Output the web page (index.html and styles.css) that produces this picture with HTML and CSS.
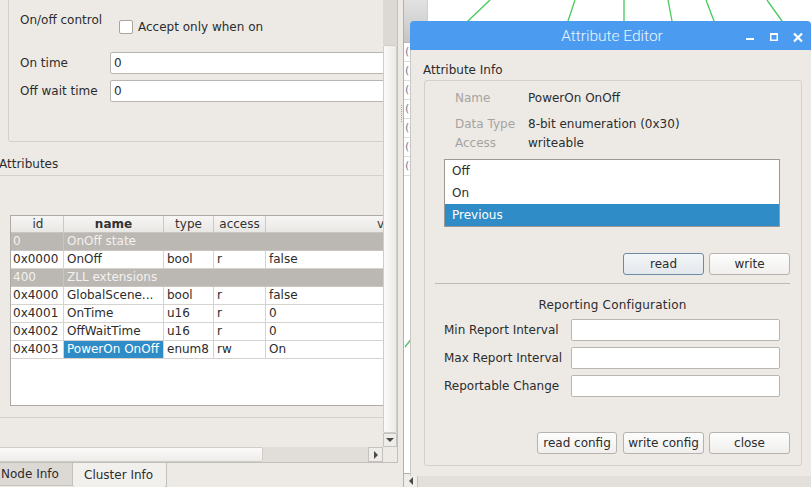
FILE: index.html
```html
<!DOCTYPE html>
<html>
<head>
<meta charset="utf-8">
<link rel="stylesheet" href="styles.css">
</head>
<body>
<div class="app">
  <div class="leftcol">
    <div class="scrollarea">
      <div class="sa-main">
        <div class="viewport">
          <div class="opts-group">
            <div class="form-row row-top">
              <div class="flabel">On/off control</div>
              <div class="check-field"><span class="checkbox"></span><span>Accept only when on</span></div>
            </div>
            <div class="form-row">
              <div class="flabel">On time</div>
              <div class="line-edit wide">0</div>
            </div>
            <div class="form-row">
              <div class="flabel">Off wait time</div>
              <div class="line-edit wide">0</div>
            </div>
          </div>
          <div class="group-title">Attributes</div>
          <div class="attr-group">
            <div class="tbl">
              <div class="trow thead">
                <div class="c c-id">id</div><div class="c c-name"><b>name</b></div><div class="c c-type">type</div><div class="c c-acc">access</div><div class="c c-val">value</div>
              </div>
              <div class="trow tgroup">
                <div class="c c-id">0</div><div class="c c-span">OnOff state</div>
              </div>
              <div class="trow">
                <div class="c c-id">0x0000</div><div class="c c-name">OnOff</div><div class="c c-type">bool</div><div class="c c-acc">r</div><div class="c c-val">false</div>
              </div>
              <div class="trow tgroup">
                <div class="c c-id">400</div><div class="c c-span">ZLL extensions</div>
              </div>
              <div class="trow">
                <div class="c c-id">0x4000</div><div class="c c-name">GlobalScene...</div><div class="c c-type">bool</div><div class="c c-acc">r</div><div class="c c-val">false</div>
              </div>
              <div class="trow">
                <div class="c c-id">0x4001</div><div class="c c-name">OnTime</div><div class="c c-type">u16</div><div class="c c-acc">r</div><div class="c c-val">0</div>
              </div>
              <div class="trow">
                <div class="c c-id">0x4002</div><div class="c c-name">OffWaitTime</div><div class="c c-type">u16</div><div class="c c-acc">r</div><div class="c c-val">0</div>
              </div>
              <div class="trow">
                <div class="c c-id">0x4003</div><div class="c c-name sel">PowerOn OnOff</div><div class="c c-type">enum8</div><div class="c c-acc">rw</div><div class="c c-val">On</div>
              </div>
            </div>
          </div>
        </div>
        <div class="vscroll">
          <div class="vgroove"></div>
          <div class="vhandle"></div>
          <div class="sbtn"><span class="tri-down"></span></div>
        </div>
      </div>
      <div class="sa-bottom">
        <div class="hscroll">
          <div class="hhandle"></div>
          <div class="hgroove"></div>
          <div class="sbtn hbtn"><span class="tri-right"></span></div>
        </div>
        <div class="corner"></div>
      </div>
    </div>
    <div class="tabs">
      <div class="tab">Node Info</div>
      <div class="tab active">Cluster Info</div>
    </div>
  </div>
  <div class="splitter"><div class="grip"></div></div>
  <div class="right">
    <div class="graph">
      <svg class="links" width="407" height="473" viewBox="0 0 407 473">
        <g stroke="#45c95a" stroke-width="1.3" fill="none">
          <line x1="86" y1="0" x2="44" y2="40"/>
          <line x1="171" y1="0" x2="157" y2="42"/>
          <line x1="220" y1="0" x2="220" y2="42"/>
          <line x1="264" y1="0" x2="272" y2="42"/>
          <line x1="302" y1="0" x2="318" y2="42"/>
          <line x1="363" y1="0" x2="393" y2="42"/>
          <line x1="1" y1="347" x2="30" y2="310"/>
        </g>
      </svg>
      <div class="nodelist">
        <div class="nl-head"></div>
        <div class="nl-row">(2</div>
        <div class="nl-row">(1</div>
        <div class="nl-row">(0</div>
        <div class="nl-row">(5</div>
        <div class="nl-row">(0</div>
        <div class="nl-row">(0</div>
        <div class="nl-row">(0</div>
      </div>
    </div>
    <div class="gscroll">
      <div class="garrow"><span class="tri-left"></span></div>
      <div class="ggroove"></div>
    </div>
  </div>
</div>

<div class="dialog">
  <div class="titlebar">
    <div></div>
    <div class="wtitle">Attribute Editor</div>
    <div class="wbtns">
      <span class="wbtn"><svg width="24" height="29" viewBox="0 0 24 29"><rect x="8" y="17" width="8" height="2" fill="#ffffff"/></svg></span>
      <span class="wbtn"><svg width="24" height="29" viewBox="0 0 24 29"><rect x="8.75" y="12.75" width="6.5" height="6.5" fill="none" stroke="#ffffff" stroke-width="1.5"/><rect x="8" y="12" width="8" height="2" fill="#ffffff"/></svg></span>
      <span class="wbtn"><svg width="24" height="29" viewBox="0 0 24 29"><path d="M8 12.5 L16 20.5 M16 12.5 L8 20.5" stroke="#ffffff" stroke-width="2.2" fill="none"/></svg></span>
    </div>
  </div>
  <div class="dlg-body">
    <div class="dlg-gtitle">Attribute Info</div>
    <div class="dlg-group">
      <div class="info">
        <div class="info-row r1"><span class="ilabel">Name</span><span>PowerOn OnOff</span></div>
        <div class="info-row r2"><span class="ilabel">Data Type</span><span>8-bit enumeration (0x30)</span></div>
        <div class="info-row r3"><span class="ilabel">Access</span><span>writeable</span></div>
      </div>
      <div class="enum-list">
        <div class="enum-item">Off</div>
        <div class="enum-item">On</div>
        <div class="enum-item selected">Previous</div>
      </div>
      <div class="btn-row rw-row">
        <div class="btn default">read</div>
        <div class="btn">write</div>
      </div>
      <div class="hsep"></div>
      <div class="rep-title">Reporting Configuration</div>
      <div class="rep-form">
        <div class="rep-row"><span class="rlabel">Min Report Interval</span><div class="line-edit rep-input"></div></div>
        <div class="rep-row"><span class="rlabel">Max Report Interval</span><div class="line-edit rep-input"></div></div>
        <div class="rep-row"><span class="rlabel">Reportable Change</span><div class="line-edit rep-input"></div></div>
      </div>
      <div class="btn-row cfg-row">
        <div class="btn b-rc">read config</div>
        <div class="btn b-wc">write config</div>
        <div class="btn b-close">close</div>
      </div>
    </div>
  </div>
</div>
</body>
</html>
```

FILE: styles.css
```css
* { box-sizing: border-box; }

body {
  margin: 0;
  width: 811px;
  height: 487px;
  overflow: hidden;
  position: relative;
  background: #edeae6;
  font-family: "DejaVu Sans", sans-serif;
  font-size: 12px;
  line-height: 14px;
  color: #2c2c2c;
}

.app { display: flex; height: 487px; }

/* ---------- left column ---------- */
.leftcol { width: 398px; flex: none; display: flex; flex-direction: column; }

.scrollarea {
  width: 398px;
  height: 463px;
  border-right: 1px solid #c2beb9;
  border-bottom: 1px solid #c2beb9;
  display: flex;
  flex-direction: column;
}

.sa-main { display: flex; height: 447px; }

.viewport { width: 383px; height: 447px; overflow: hidden; flex: none; }

.opts-group {
  margin: -10px 0 0 8px;
  width: 400px;
  border: 1px solid #d3cfca;
  border-radius: 3px;
  padding: 22px 0 39px 11px;
  display: flex;
  flex-direction: column;
  gap: 6px;
}

.form-row { display: flex; align-items: center; }
.row-top { height: 33px; align-items: flex-start; }
.flabel { width: 90px; flex: none; }
.check-field { display: flex; align-items: center; padding-top: 7px; padding-left: 9px; gap: 5px; }
.checkbox {
  width: 14px; height: 14px;
  background: #fff;
  border: 1px solid #a9a5a0;
  border-radius: 2px;
  display: inline-block;
}

.line-edit {
  height: 22px;
  background: #fff;
  border: 1px solid #b9b5b0;
  border-radius: 2px;
  padding-left: 3px;
  line-height: 20px;
}
.wide { width: 300px; }

.group-title { margin: 15px 0 0 -1px; height: 14px; }

.attr-group {
  margin: 4px 0 0 -3px;
  width: 400px;
  border: 1px solid #d3cfca;
  border-radius: 3px;
  padding: 39px 0 11px 12px;
}

.tbl {
  width: 520px;
  height: 191px;
  border: 1px solid #aeaaa6;
  background: #fff;
  overflow: hidden;
}

.trow { display: flex; height: 18px; border-bottom: 1px solid #d6d3cf; }
.trow .c {
  border-right: 1px solid #d6d3cf;
  padding-left: 3px;
  line-height: 17px;
  white-space: nowrap;
  overflow: hidden;
  flex: none;
}
.c-id { width: 53px; padding-left: 2px !important; }
.c-name { width: 100px; }
.c-type { width: 50px; }
.c-acc { width: 52px; }
.c-val { width: 256px; }
.c-span { width: 458px; border-right: none !important; }

.thead { height: 17px; background: linear-gradient(#f7f6f5, #e9e7e4); border-bottom-color: #c9c5c1; }
.thead .c { text-align: center; padding-left: 0; line-height: 16px; border-right-color: #cdc9c5; color: #333; }
.thead b { font-weight: bold; }

.tgroup { background: #bbb7b3; color: #f3f1ef; border-bottom-color: #c9c6c2; }
.tgroup .c { border-right-color: #c8c5c1; }

.sel { background: #308cc6; color: #fff; }

/* vertical scrollbar */
.vscroll { width: 14px; flex: none; display: flex; flex-direction: column; }
.vgroove { height: 45px; background: #dcd9d5; }
.vhandle {
  flex: 1;
  background: linear-gradient(to right, #fbfaf9, #ecebe8);
  border: 1px solid #d0ccc7;
  border-radius: 2px;
}
.sbtn {
  height: 14px;
  background: #efedea;
  border: 1px solid #c6c2bd;
  display: flex;
  align-items: center;
  justify-content: center;
}
.tri-down { width: 0; height: 0; border-left: 4px solid transparent; border-right: 4px solid transparent; border-top: 4px solid #4a4a4a; }
.tri-right { width: 0; height: 0; border-top: 4px solid transparent; border-bottom: 4px solid transparent; border-left: 4px solid #4a4a4a; }
.tri-left { width: 0; height: 0; border-top: 4px solid transparent; border-bottom: 4px solid transparent; border-right: 4px solid #4a4a4a; }

.sa-bottom { display: flex; height: 15px; }
.hscroll { width: 383px; display: flex; }
.hhandle {
  width: 263px;
  background: linear-gradient(#fbfaf9, #eeece9);
  border: 1px solid #d0ccc7;
  border-left: none;
  border-radius: 0 2px 2px 0;
}
.hgroove { flex: 1; background: #e1deda; }
.hbtn { width: 15px; height: 15px; }
.corner { flex: 1; background: #edeae6; }

.tabs { display: flex; height: 24px; align-items: flex-start; }
.tab {
  height: 23px;
  line-height: 22px;
  padding: 0 0 0 1px;
  background: #dcd9d5;
  border-right: 1px solid #c4c0bb;
  border-bottom: 1px solid #c4c0bb;
  width: 73px;
  white-space: nowrap;
}
.tab.active {
  width: 94px;
  height: 25px;
  line-height: 24px;
  padding-left: 11px;
  background: #f2f0ed;
  border: 1px solid #c4c0bb;
  border-top: none;
  border-left: none;
  border-radius: 0 0 3px 3px;
}

.splitter { width: 5px; flex: none; padding-top: 105px; }
.grip { width: 1px; height: 17px; margin-left: 3px; border-left: 1px dotted #a9a5a0; }

/* ---------- right ---------- */
.right { flex: 1; display: flex; flex-direction: column; border-left: 1px solid #b3b0ac; }
.graph { height: 473px; background: #fff; position: relative; overflow: hidden; }
.links { position: absolute; left: 0; top: 0; }
.nodelist {
  position: absolute;
  left: 0; top: 0;
  width: 24px;
  background: #fff;
  border-right: 1px solid #cfcfcf;
}
.nl-head { height: 43px; background: linear-gradient(#e2e2e2, #c5c5c5); border-bottom: 1px solid #b9b9b9; }
.nl-row { height: 19px; border-bottom: 1px solid #dcdcdc; font-size: 11px; line-height: 18px; color: #6f7e96; padding-left: 1px; }

.gscroll { height: 14px; display: flex; border-top: 1px solid #b3b0ac; }
.garrow { width: 14px; background: #efedea; border-right: 1px solid #c6c2bd; display: flex; align-items: center; justify-content: center; }
.ggroove { flex: 1; background: #e3e0dc; }

/* ---------- dialog ---------- */
.dialog {
  position: absolute;
  left: 410px;
  top: 21px;
  width: 401px;
  height: 455px;
  display: flex;
  flex-direction: column;
}

.titlebar {
  height: 29px;
  flex: none;
  background: #4b9bf0;
  border-radius: 4px 4px 0 0;
  display: grid;
  grid-template-columns: 73px 1fr 73px;
  align-items: center;
}
.wtitle {
  text-align: center;
  font-family: Roboto, "DejaVu Sans", sans-serif;
  font-weight: 300;
  font-size: 15.5px;
  color: #eef5fe;
  padding-top: 1px;
  padding-left: 3px;
}
.wbtns { display: flex; height: 29px; }
.wbtn { width: 24px; height: 29px; display: block; }
.wbtn svg { display: block; }

.dlg-body {
  flex: 1;
  background: #edeae6;
  border-left: 1px solid #cbc7c2;
  padding: 13px 9px 10px 13px;
}
.dlg-gtitle { margin-left: -1px; height: 14px; }

.dlg-group {
  margin-top: 3px;
  border: 1px solid #d3cfca;
  border-radius: 3px;
  padding: 10px 11px 11px 19px;
}

.info { margin-left: 11px; }
.info-row { display: flex; }
.info-row.r1 { height: 26px; }
.info-row.r2 { height: 19px; }
.info-row.r3 { height: 14px; }
.ilabel { width: 73px; color: #a6a39f; flex: none; }

.enum-list {
  margin-top: 9px;
  width: 336px;
  border: 1px solid #9c9995;
  background: #fff;
}
.enum-item { height: 22px; line-height: 22px; padding-left: 7px; }
.enum-item.selected { background: #308cc6; color: #fff; }

.btn-row { display: flex; justify-content: flex-end; }
.rw-row { margin-top: 26px; gap: 5px; }

.btn {
  height: 22px;
  line-height: 20px;
  text-align: center;
  border: 1px solid #b6b2ad;
  border-radius: 3px;
  background: linear-gradient(#fdfdfd, #f0efed);
  width: 81px;
  white-space: nowrap;
}
.btn.default {
  border-color: #6a8aa6;
  background: linear-gradient(#f3f5f7, #e4e8ec);
}

.hsep { margin: 8px 0 0 -9px; border-top: 1px solid #bdb9b4; height: 1px; }

.rep-title { margin: 14px 0 0 -9px; height: 14px; text-align: center; letter-spacing: 0.2px; }

.rep-form { margin-top: 7px; display: flex; flex-direction: column; gap: 6px; }
.rep-row { display: flex; align-items: center; }
.rlabel { width: 127px; flex: none; }
.rep-input { width: 209px; }

.cfg-row { margin-top: 35px; }
.b-rc { width: 80px; margin-right: 6px; }
.b-wc { width: 81px; margin-right: 5px; }
.b-close { width: 81px; }
```
